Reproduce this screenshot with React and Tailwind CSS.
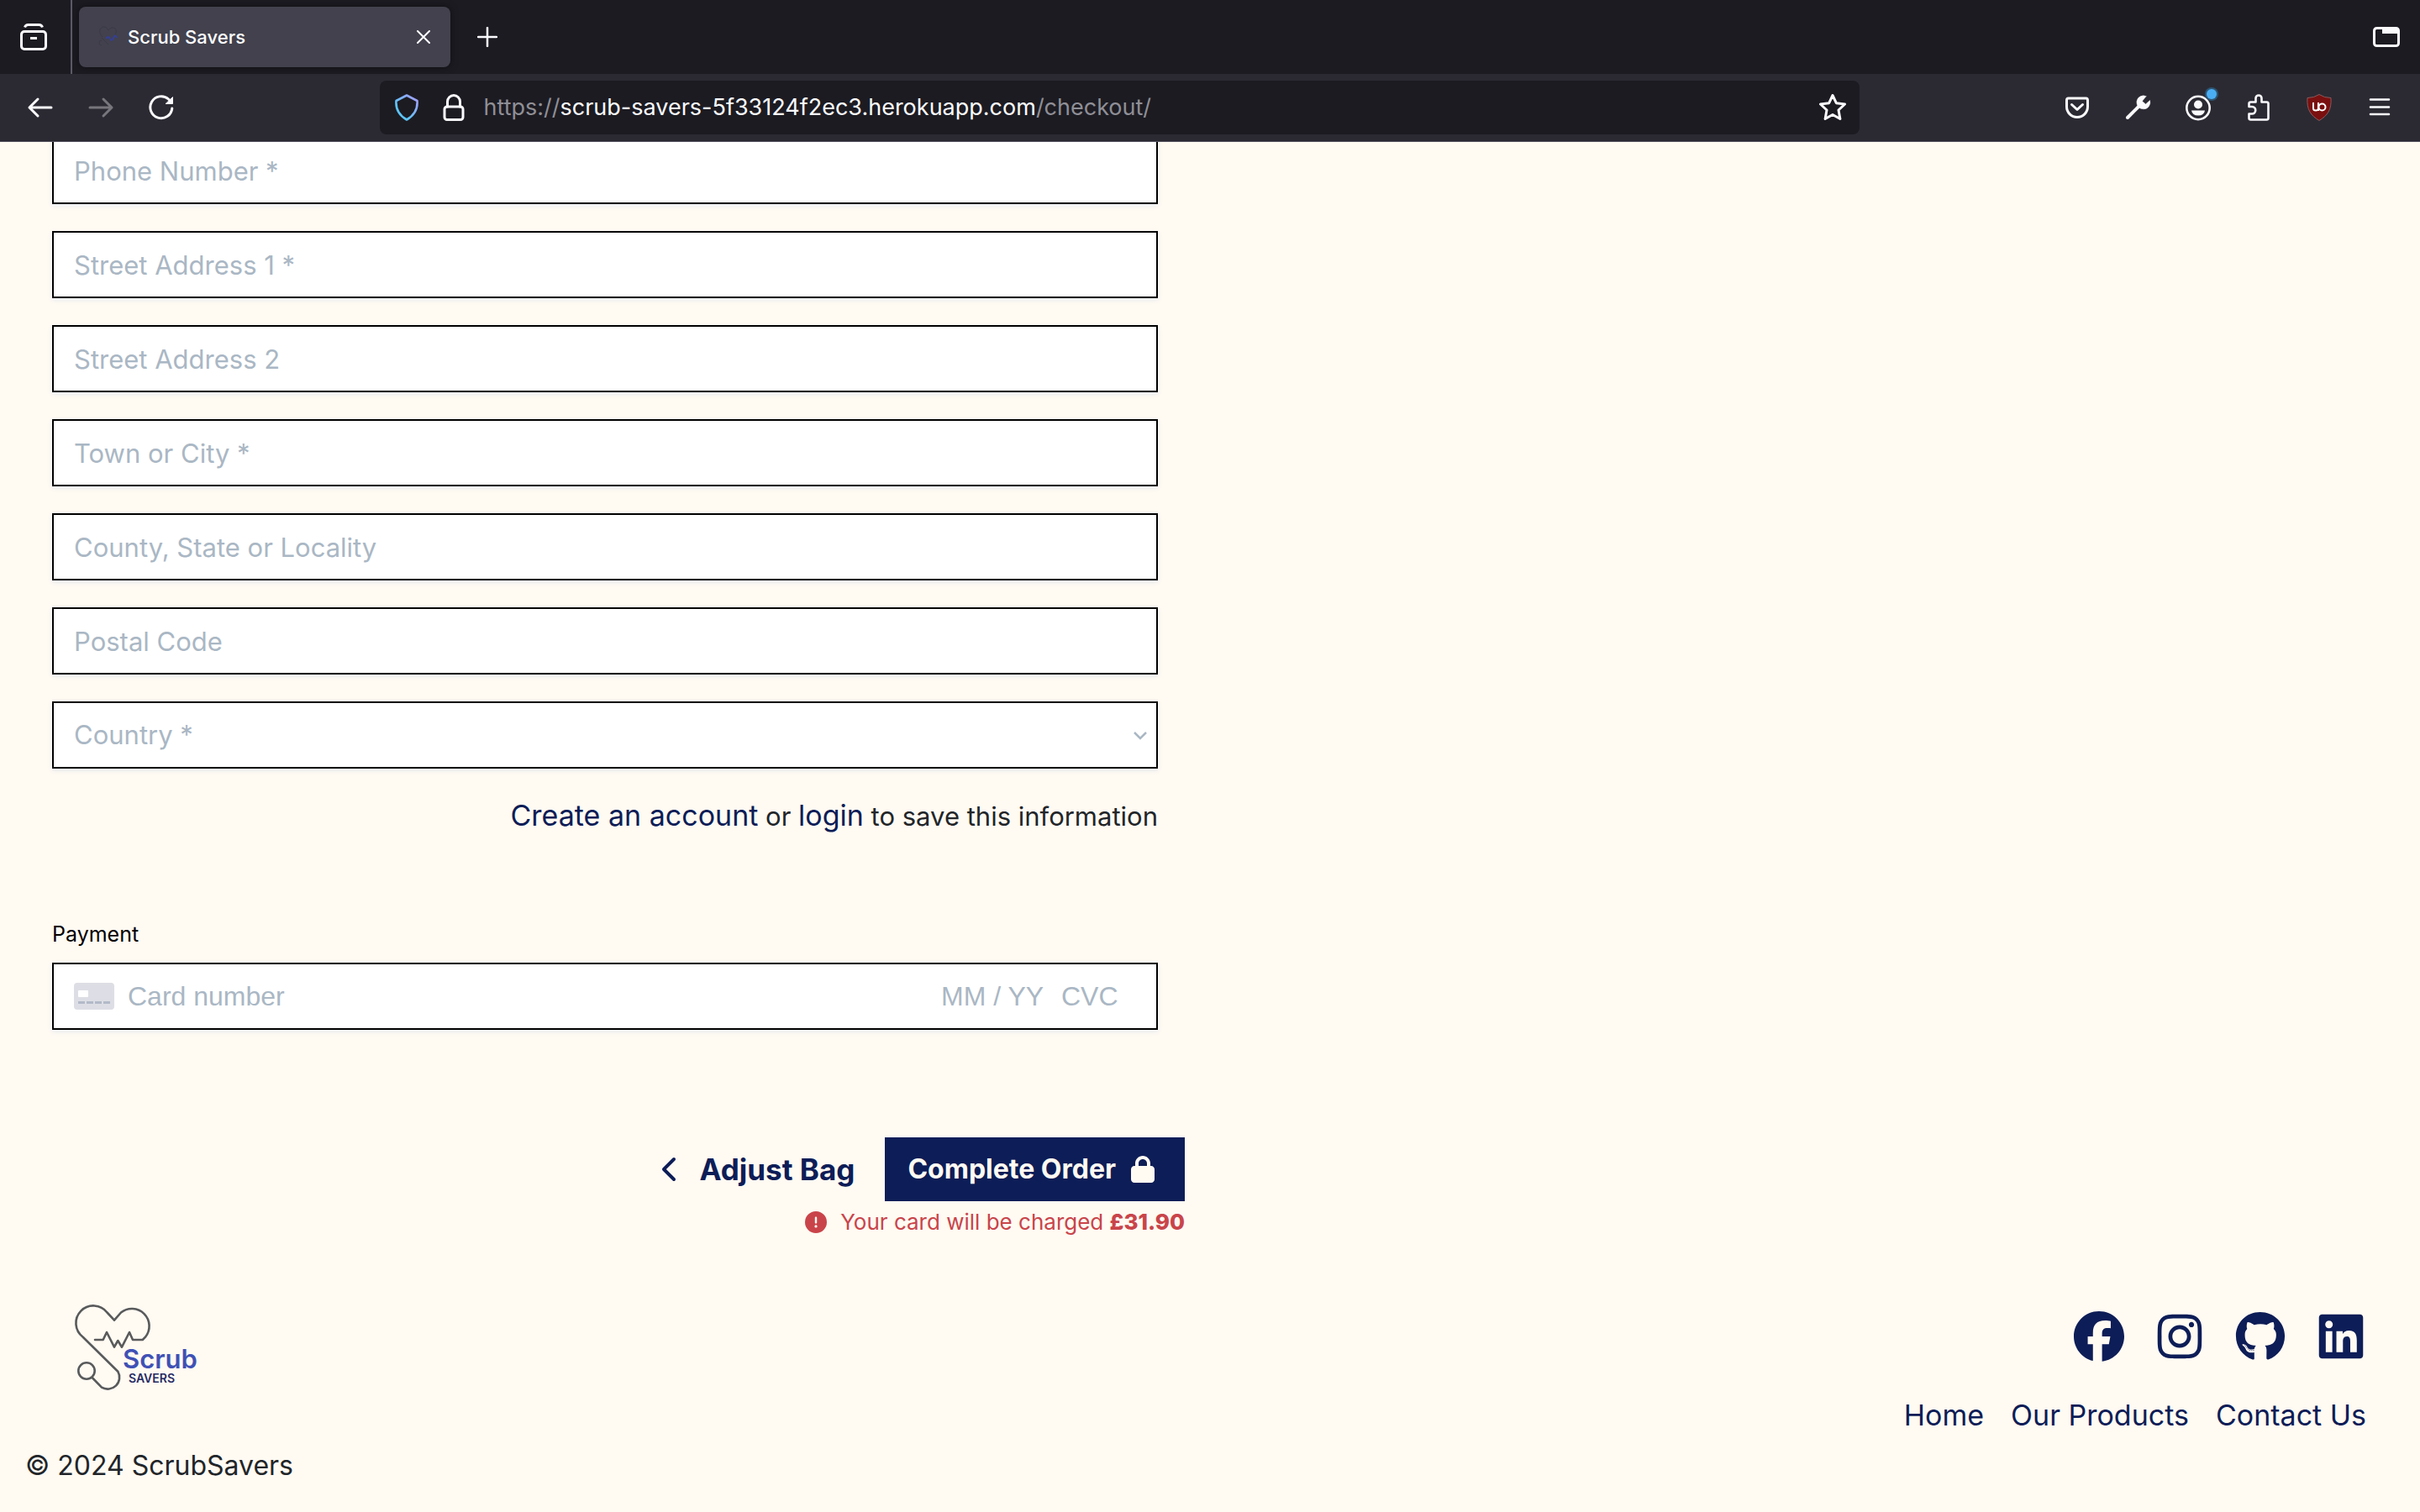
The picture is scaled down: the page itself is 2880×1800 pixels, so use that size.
import { FaFacebook, FaInstagram, FaGithub, FaLinkedin, FaLock, FaChevronLeft, FaCircleExclamation } from "react-icons/fa6";

const fields = [
  { id: "phone_number", label: "Phone Number *" },
  { id: "street_address1", label: "Street Address 1 *" },
  { id: "street_address2", label: "Street Address 2" },
  { id: "town_or_city", label: "Town or City *" },
  { id: "county", label: "County, State or Locality" },
  { id: "postcode", label: "Postal Code" },
];

const stroke = { fill: "none", stroke: "currentColor", strokeWidth: 3, strokeLinecap: "round", strokeLinejoin: "round" };

function Glyph({ children, size = "size-8", box = "0 0 32 32" }) {
  return (
    <svg viewBox={box} className={`${size} shrink-0`} aria-hidden="true" {...stroke}>
      {children}
    </svg>
  );
}

function BarButton({ label, className = "", children }) {
  return (
    <button type="button" aria-label={label} className={`flex size-16 shrink-0 items-center justify-center rounded-lg ${className}`}>
      {children}
    </button>
  );
}

function TabStrip() {
  return (
    <div className="flex h-22 items-center bg-[#1c1b22] text-[#fbfbfe]">
      <div className="flex h-full items-center border-r-2 border-[#5b5a65] pr-3 pl-2">
        <BarButton label="Recent browsing">
          <Glyph>
            <path d="M5.500 4.500q1-3 4-3h13q3 0 4 3" strokeLinecap="butt" />
            <rect x="1.500" y="9.500" width="29" height="21" rx="3.500" />
            <path d="M12 17.500h8" strokeLinecap="butt" />
          </Glyph>
        </BarButton>
      </div>
      <div className="ml-2 flex h-18 w-[442px] items-center rounded-lg bg-[#42414d] pr-4 pl-[18px] shadow-[0_0_8px_rgba(0,0,0,0.5)]">
        <svg viewBox="0 0 36 32" className="h-8 w-9" aria-hidden="true" fill="none">
          <path d="M10 16C4 10 7 4 12 4c3 0 4 3 5 4 1-1 3-4 6-3 4 1 4 5 2 8M9 17l8 8M9 20a3 3 0 1 0 0 6" stroke="#3a3946" strokeWidth="1" />
          <path d="M14 18q3-4 5 0t4-1 4 0" stroke="#343f96" strokeWidth="2" />
        </svg>
        <span className="ml-1 flex-1 text-[22px] font-medium">Scrub Savers</span>
        <button type="button" aria-label="Close tab" className="flex size-8 items-center justify-center">
          <Glyph size="size-4" box="0 0 16 16">
            <path d="M1 1l14 14M15 1L1 15" strokeWidth="2" />
          </Glyph>
        </button>
      </div>
      <BarButton label="New tab" className="ml-3">
        <Glyph size="size-6" box="0 0 24 24">
          <path d="M12 1v22M1 12h22" strokeWidth="2.500" />
        </Glyph>
      </BarButton>
      <BarButton label="List all tabs" className="mr-2 ml-auto">
        <svg viewBox="0 0 32 24" className="h-6 w-8" aria-hidden="true">
          <rect x="1.500" y="1.500" width="29" height="21" rx="3" fill="none" stroke="currentColor" strokeWidth="3" />
          <path d="M11 1h17l3 3v4H11z" fill="currentColor" />
        </svg>
      </BarButton>
    </div>
  );
}

function NavBar() {
  return (
    <div className="flex h-[81px] items-center border-b border-[#52515e] bg-[#2b2a33] text-[#fbfbfe]">
      <div className="flex shrink-0 items-center gap-2 pl-4">
        <BarButton label="Back">
          <Glyph>
            <path d="M29 16H3M13 6L3 16l10 10" />
          </Glyph>
        </BarButton>
        <BarButton label="Forward" className="text-[#77767c]">
          <Glyph>
            <path d="M3 16h26M19 6l10 10-10 10" />
          </Glyph>
        </BarButton>
        <BarButton label="Reload">
          <Glyph>
            <path d="M28.800 17A13 13 0 1 1 24.500 6l2 2" />
            <path d="M29.500 4v7.500h-8z" fill="currentColor" strokeWidth="1" />
          </Glyph>
        </BarButton>
      </div>
      <div className="flex-5" />
      <div className="flex h-16 min-w-0 flex-38 items-center rounded-lg bg-[#1c1b22] px-4">
        <button type="button" aria-label="Tracking protection" className="flex size-8 items-center">
          <svg viewBox="0 0 32 32" className="size-8" fill="none" aria-hidden="true">
            <defs>
              <linearGradient id="shield" x1="0" y1="1" x2="1" y2="0">
                <stop offset="0.300" stopColor="#5cc4f8" />
                <stop offset="1" stopColor="#a99bf8" />
              </linearGradient>
            </defs>
            <path d="M16 1.500L28.500 8c.8 10-3 17-12.500 22.500C6.500 25 2.700 18 3.500 8z" stroke="url(#shield)" strokeWidth="2.600" strokeLinejoin="round" />
          </svg>
        </button>
        <button type="button" aria-label="Site information" className="ml-6 flex size-8 items-center">
          <Glyph>
            <rect x="5" y="15" width="22" height="15.500" rx="3" />
            <path d="M8.500 15V9a7.500 7.500 0 0 1 15 0v6" />
          </Glyph>
        </button>
        <div role="textbox" aria-label="Address" className="ml-5 flex-1 text-[27px] text-[#8f8f96]">
          https://<span className="text-[#fbfbfe]">scrub-savers-5f33124f2ec3.herokuapp.com</span>/checkout/
        </div>
        <button type="button" aria-label="Bookmark" className="flex size-8 items-center">
          <Glyph>
            <path d="M16 1.500l4.300 9.200 10.200 1.300-7.500 7 1.900 10.500L16 24.500l-8.900 5L9 19l-7.500-7 10.200-1.300z" />
          </Glyph>
        </button>
      </div>
      <div className="flex-5" />
      <div className="flex shrink-0 items-center gap-2 pr-4">
        <BarButton label="Save to Pocket">
          <Glyph>
            <path d="M5.500 5h21q2 0 2 2.500V15a12.500 12.500 0 0 1-25 0V7.500Q3.500 5 5.500 5z" />
            <path d="M9.500 12.500l6.500 6 6.500-6" />
          </Glyph>
        </BarButton>
        <BarButton label="Developer tools">
          <Glyph>
            <path d="M4 28L19 13" strokeWidth="4" />
            <path d="M26 2.500A8 8 0 1 0 30.500 7.500L25.500 12l-4-3.500z" fill="currentColor" strokeWidth="0.500" />
          </Glyph>
        </BarButton>
        <BarButton label="Account" className="relative">
          <svg viewBox="0 0 32 32" className="size-8" aria-hidden="true">
            <circle cx="16" cy="16.500" r="13.700" fill="none" stroke="currentColor" strokeWidth="2.600" />
            <circle cx="16" cy="12.500" r="5" fill="currentColor" />
            <path d="M8 19.500h16q-1 6-8 6t-8-6z" fill="currentColor" />
          </svg>
          <span className="absolute top-2.5 right-2.5 size-3 rounded-full bg-[#4aaef5] ring-2 ring-[#2d5674]" />
        </BarButton>
        <BarButton label="Extensions">
          <Glyph>
            <path
              d="M4.500 23.500v5q0 2 2 2h19q2 0 2-2v-17q0-2-2-2H19.500V5a3.500 3.500 0 0 0-7 0v4.500h-6q-2 0-2 2v3.500H8a4.200 4.200 0 0 1 0 8.500z"
              strokeWidth="2.600"
            />
          </Glyph>
        </BarButton>
        <BarButton label="uBlock Origin">
          <svg viewBox="0 0 32 32" className="size-8" aria-hidden="true" fill="none">
            <path d="M16 .5q6 4 14 4c1 14-4 21-14 27C6 25.500 1 18.500 2 4.500q8 0 14-4z" fill="#7a0f0f" stroke="#8c5a5c" />
            <path d="M9 10v7q0 2.500 3 2.500t3-2.500v-7M15 16v4" stroke="#fff" strokeWidth="2" />
            <circle cx="19.500" cy="15.500" r="4" stroke="#fff" strokeWidth="2" />
          </svg>
        </BarButton>
        <BarButton label="Menu">
          <Glyph>
            <path d="M5 6.500h22M5 15.500h22M5 24h22" strokeWidth="2.600" />
          </Glyph>
        </BarButton>
      </div>
    </div>
  );
}

const box = "h-20 w-full rounded-none border-2 border-black bg-white px-6 text-[31px] placeholder:text-[#aab7c4] shadow-[0_2px_6px_0_#e6ebf1]";

function CheckoutForm() {
  return (
    <form className="-mt-[6px] w-1/2 pl-[62px]">
      <div className="pr-[62px]">
        <div className="flex flex-col gap-8">
          {fields.map((f) => (
            <input key={f.id} id={f.id} type="text" aria-label={f.label} placeholder={f.label} className={`${box} block`} />
          ))}
          <div className="relative">
            <select id="country" aria-label="Country" className={`${box} block appearance-none text-[#aab7c4]`}>
              <option>Country *</option>
            </select>
            <svg viewBox="0 0 18 12" className="pointer-events-none absolute top-[35px] right-3 h-3 w-[18px]" fill="none" aria-hidden="true">
              <path d="M2 2l7 7 7-7" stroke="#aab7c4" strokeWidth="2.500" />
            </svg>
          </div>
        </div>
        <p className="mt-8 text-right text-[31px] leading-[48px] text-[#212529]">
          <a href="#signup" className="text-[34px] text-[#0d1d57]">Create an account</a> or{" "}
          <a href="#login" className="text-[34px] text-[#0d1d57]">login</a> to save this information
        </p>
        <fieldset className="mt-[98px]">
          <legend className="text-[25px] leading-9 text-black">Payment</legend>
          <div className={`${box} mt-4 flex items-center font-['Liberation_Sans',sans-serif]`}>
            <svg viewBox="0 0 48 32" className="h-8 w-12 shrink-0" aria-hidden="true">
              <rect width="48" height="32" rx="4" fill="#dddee5" />
              <rect x="5" y="9" width="12" height="8" rx="1" fill="#fff" />
              <path d="M5 23.500h8M15 23.500h8M25 23.500h8M35 23.500h8" stroke="#b3bac8" strokeWidth="3" />
            </svg>
            <input aria-label="Card number" placeholder="Card number" className="ml-4 h-12 min-w-0 flex-1 text-[32px] placeholder:text-[#aab7c4]" />
            <input aria-label="Expiry date" placeholder="MM / YY" className="h-12 w-[143px] text-[32px] placeholder:text-[#aab7c4]" />
            <input aria-label="CVC" placeholder="CVC" className="h-12 w-[89px] text-[32px] placeholder:text-[#aab7c4]" />
          </div>
        </fieldset>
      </div>
      <div className="mt-32 flex items-center justify-end pr-[30px] text-[32px] font-bold">
        <a href="#bag" className="mr-9 flex items-center gap-6 text-[35px] text-[#0d1d57]">
          <FaChevronLeft className="h-9 w-5" />
          Adjust Bag
        </a>
        <button type="submit" className="flex h-19 items-center gap-4 bg-[#0d1d57] pr-[34px] pl-[27px] text-[#fffaf2]">
          Complete Order
          <FaLock className="size-8" />
        </button>
      </div>
      <p className="mt-1 flex items-center justify-end pr-[30px] text-[26px] leading-[42px] text-[#c9444a]">
        <FaCircleExclamation className="mr-4 size-[26px]" />
        <span>
          Your card will be charged <strong className="font-extrabold">£31.90</strong>
        </span>
      </p>
    </form>
  );
}

function Logo() {
  return (
    <svg viewBox="0 0 148 104" className="h-[104px] w-[148px] overflow-visible" role="img" aria-label="Scrub Savers">
      <g fill="none" stroke="#585a5b" strokeWidth="2.600" strokeLinejoin="round" strokeLinecap="round">
        <path d="M23 42h9.700L37 33l9 17.700L50.300 43 55 50.700 64 33l4 9h11.700L83 38.700A20.700 20.700 0 0 0 54 9.500L46 18.700 37.500 9.500A20.700 20.700 0 1 0 8.700 38.700L50.300 79.700A14 14 0 0 1 31 98.700L19.700 87" />
        <circle cx="13" cy="79" r="9.700" />
      </g>
      <text x="56" y="76" fontSize="31" fontWeight="600" fill="#3f51b5">Scrub</text>
      <text x="63" y="93" fontSize="14" fontWeight="600" fill="#252a63">SAVERS</text>
    </svg>
  );
}

function Footer() {
  return (
    <footer className="mt-[77px] flex justify-between text-[32px]">
      <div className="pl-[30px]">
        <a href="#home" className="ml-[60px] block w-36"><Logo /></a>
        <p className="mt-16 leading-12 text-[#212529]">© 2024 ScrubSavers</p>
      </div>
      <div className="flex flex-col items-end pr-16 text-[#0d1d57]">
        <div className="mt-2 flex items-center gap-9">
          <a href="#facebook" aria-label="Facebook"><FaFacebook className="size-15" /></a>
          <a href="#instagram" aria-label="Instagram"><FaInstagram className="size-15" /></a>
          <a href="#github" aria-label="GitHub"><FaGithub className="size-15" /></a>
          <a href="#linkedin" aria-label="LinkedIn"><FaLinkedin className="size-15" /></a>
        </div>
        <nav className="mt-10 flex gap-8 text-[34px] leading-12">
          <a href="#home">Home</a>
          <a href="#products">Our Products</a>
          <a href="#contact">Contact Us</a>
        </nav>
      </div>
    </footer>
  );
}

export default function App() {
  return (
    <div className="flex h-screen flex-col overflow-hidden bg-[#fffaf2] font-['Inter',sans-serif]">
      <header className="relative z-10 shrink-0">
        <TabStrip />
        <NavBar />
      </header>
      <main className="min-h-0 flex-1">
        <CheckoutForm />
        <Footer />
      </main>
    </div>
  );
}
